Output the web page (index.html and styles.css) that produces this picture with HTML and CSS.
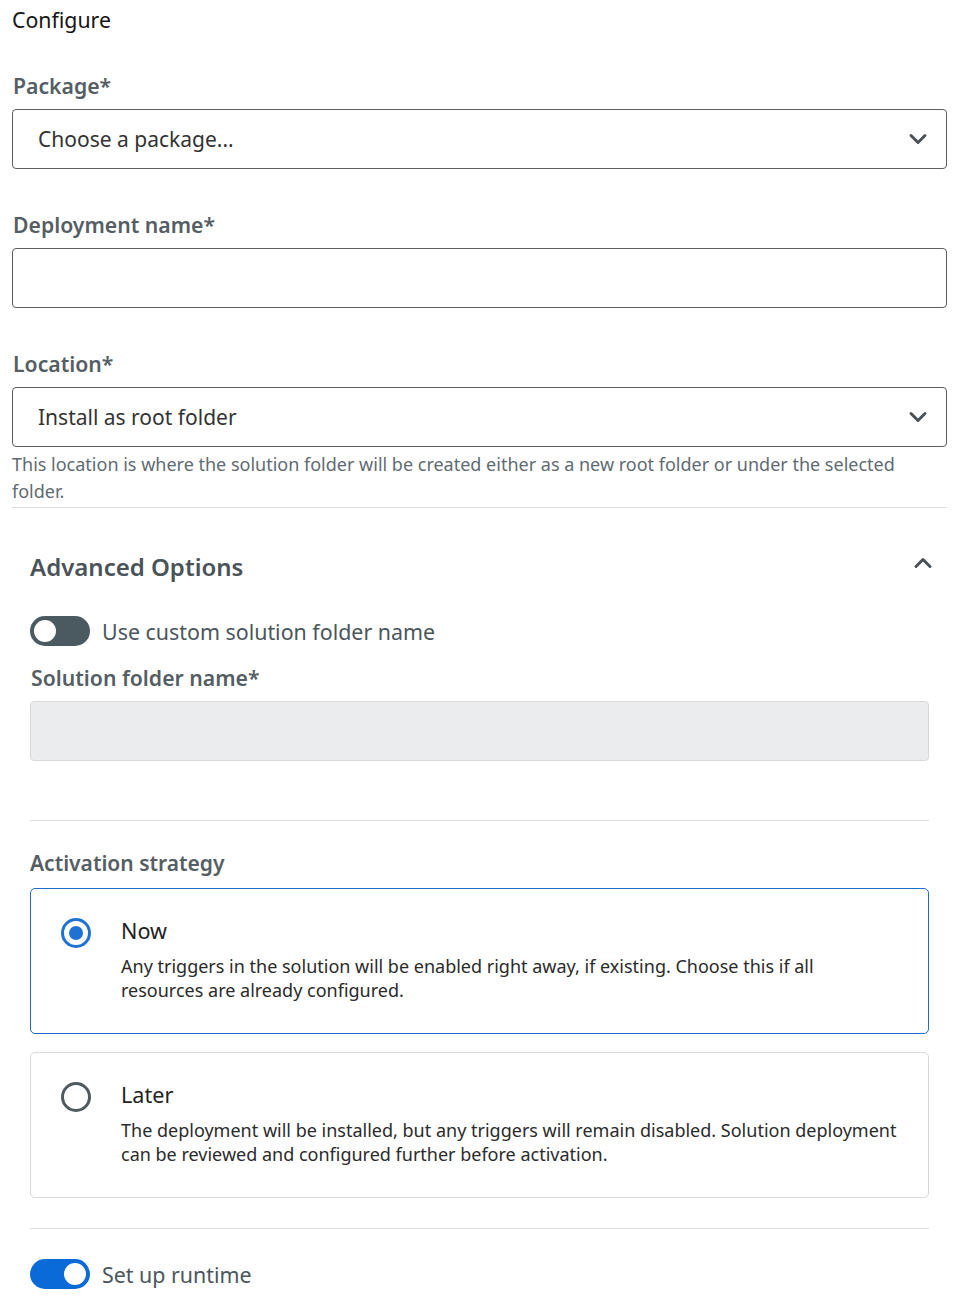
FILE: index.html
```html
<!DOCTYPE html>
<html lang="en">
<head>
<meta charset="utf-8">
<title>Configure</title>
<link rel="stylesheet" href="styles.css">
</head>
<body>
<main class="page">
  <h1 class="title">Configure</h1>

  <div class="field">
    <label class="label">Package*</label>
    <div class="select">
      <span class="select-text">Choose a package...</span>
      <svg class="chev" width="20" height="12" viewBox="0 0 20 12"><path d="M3 2.5 L10 9.5 L17 2.5" fill="none" stroke="#4b5358" stroke-width="3" stroke-linecap="round" stroke-linejoin="round"/></svg>
    </div>
  </div>

  <div class="field">
    <label class="label">Deployment name*</label>
    <div class="input"></div>
  </div>

  <div class="field">
    <label class="label">Location*</label>
    <div class="select">
      <span class="select-text">Install as root folder</span>
      <svg class="chev" width="20" height="12" viewBox="0 0 20 12"><path d="M3 2.5 L10 9.5 L17 2.5" fill="none" stroke="#4b5358" stroke-width="3" stroke-linecap="round" stroke-linejoin="round"/></svg>
    </div>
    <p class="help">This location is where the solution folder will be created either as a new root folder or under the selected folder.</p>
  </div>

  <hr class="rule">

  <section class="advanced">
    <div class="adv-head">
      <h2 class="adv-title">Advanced Options</h2>
      <svg class="caret" width="20" height="12" viewBox="0 0 20 12"><path d="M3 9.5 L10 2.5 L17 9.5" fill="none" stroke="#4b5358" stroke-width="3" stroke-linecap="round" stroke-linejoin="round"/></svg>
    </div>

    <div class="toggle-row">
      <span class="toggle"><span class="knob"></span></span>
      <span class="toggle-label">Use custom solution folder name</span>
    </div>

    <div class="field sub">
      <label class="label">Solution folder name*</label>
      <div class="input disabled"></div>
    </div>

    <hr class="rule inner">

    <h3 class="label act">Activation strategy</h3>

    <div class="card selected">
      <span class="radio on"><span class="dot"></span></span>
      <div class="card-body">
        <div class="card-title">Now</div>
        <p class="card-desc">Any triggers in the solution will be enabled right away, if existing. Choose this if all resources are already configured.</p>
      </div>
    </div>

    <div class="card">
      <span class="radio"></span>
      <div class="card-body">
        <div class="card-title">Later</div>
        <p class="card-desc">The deployment will be installed, but any triggers will remain disabled. Solution deployment can be reviewed and configured further before activation.</p>
      </div>
    </div>

    <hr class="rule inner bottom">

    <div class="toggle-row">
      <span class="toggle on"><span class="knob"></span></span>
      <span class="toggle-label">Set up runtime</span>
    </div>
  </section>
</main>
</body>
</html>
```

FILE: styles.css
```css
* { box-sizing: border-box; }
html, body { margin: 0; padding: 0; background: #fff; }
body {
  font-family: "Noto Sans", "Open Sans", sans-serif;
  color: #1c1c1c;
}
.page {
  padding: 6px 12px 0 12px;
}
.title {
  margin: 0;
  font-size: 21.3px;
  line-height: 28px;
  font-weight: 400;
  color: #161616;
}
.field { display: flex; flex-direction: column; }
.title + .field { margin-top: 38px; }
.field + .field { margin-top: 42px; }
.label {
  display: block;
  margin: 0 0 9px 1px;
  font-size: 21.2px;
  line-height: 28px;
  font-weight: 600;
  color: #555e64;
}
.select, .input {
  height: 60px;
  border: 1px solid #5a5f63;
  border-radius: 4px;
  background: #fff;
}
.select {
  display: flex;
  align-items: center;
  justify-content: space-between;
  padding: 0 18px 0 25px;
}
.select-text {
  font-size: 21px;
  color: #333;
}
.help {
  margin: 4px 0 0 0;
  font-size: 18px;
  line-height: 27px;
  color: #5f6b73;
}
.rule {
  border: 0;
  border-top: 1px solid #dcdcdc;
  margin: 2px 0 0 0;
}
.advanced {
  padding: 0 18px;
}
.adv-head {
  display: flex;
  align-items: center;
  justify-content: space-between;
  margin-top: 43px;
}
.adv-title {
  margin: 0;
  font-size: 24px;
  line-height: 32px;
  font-weight: 600;
  color: #4a5358;
}
.caret { margin-top: -8px; margin-right: -4px; }
.toggle-row {
  display: flex;
  align-items: center;
  gap: 12px;
}
.adv-head + .toggle-row { margin-top: 33px; }
.toggle {
  position: relative;
  width: 60px;
  height: 30px;
  border-radius: 15px;
  background: #4b5a61;
  flex: none;
}
.toggle .knob {
  position: absolute;
  top: 4px;
  left: 4px;
  width: 22px;
  height: 22px;
  border-radius: 50%;
  background: #fff;
}
.toggle.on { background: #0a6ad8; }
.toggle.on .knob { left: 34px; }
.toggle-label {
  font-size: 21.4px;
  color: #4b565c;
}
.field.sub { margin-top: 18px; }
.input.disabled {
  background: #ebeced;
  border-color: #d8d9da;
}
.rule.inner { margin-top: 59px; }
.act { margin: 28px 0 11px 0; font-size: 21px; }
.card {
  display: flex;
  align-items: flex-start;
  gap: 30px;
  border: 1px solid #d9d9d9;
  border-radius: 5px;
  padding: 29px 31px 29px 30px;
  min-height: 146px;
}
.card.selected { border-color: #1d6fc9; }
.card + .card { margin-top: 18px; }
.radio {
  flex: none;
  width: 30px;
  height: 30px;
  border-radius: 50%;
  border: 3px solid #4f5a5f;
  display: flex;
  align-items: center;
  justify-content: center;
}
.radio.on { border-color: #1f72d4; }
.radio .dot {
  width: 14px;
  height: 14px;
  border-radius: 50%;
  background: #1f72d4;
}
.card-body { flex: 1; }
.card-title {
  font-size: 21.6px;
  line-height: 26px;
  color: #222;
}
.card-desc {
  margin: 10px 0 0 0;
  font-size: 18px;
  line-height: 24px;
  color: #2b2b2b;
}
.rule.inner.bottom { margin-top: 30px; }
.rule.inner.bottom + .toggle-row { margin-top: 30px; }
```
